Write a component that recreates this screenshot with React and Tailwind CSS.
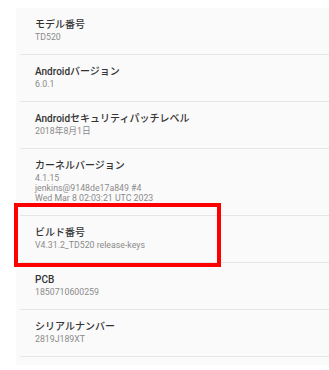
const rows = [
  { title: 'モデル番号', sub: ['TD520'] },
  { title: 'Androidバージョン', sub: ['6.0.1'] },
  { title: 'Androidセキュリティパッチレベル', sub: ['2018年8月1日'] },
  {
    title: 'カーネルバージョン',
    sub: ['4.1.15', 'jenkins@9148de17a849 #4', 'Wed Mar 8 02:03:21 UTC 2023'],
  },
  { title: 'ビルド番号', sub: ['V4.31.2_TD520 release-keys'] },
  { title: 'PCB', sub: ['1850710600259'] },
  { title: 'シリアルナンバー', sub: ['2819J189XT'] },
]

export default function App() {
  return (
    <div
      className="relative w-full h-[370px] bg-white pt-[8px] pl-[16px] overflow-hidden"
      style={{ fontFamily: "Roboto, 'Noto Sans CJK JP', sans-serif" }}
    >
      <div className="bg-[#fafafa] pb-[8px]">
        {rows.map((row) => (
          <div key={row.title}>
            <div className="pl-[19px] pt-[10px] pb-[12px]">
              <div className="text-[10px] leading-[14px] text-[#333] font-medium">{row.title}</div>
              {row.sub.map((line) => (
                <div key={line} className="text-[8.75px] leading-[10px] text-[#8a8a8a]">
                  {line}
                </div>
              ))}
            </div>
            <div className="ml-[4px] h-px bg-[#e6e6e6]" />
          </div>
        ))}
      </div>
      <div className="absolute left-[14px] top-[203px] w-[207px] h-[64px] border-4 border-[#ff0000]" />
    </div>
  )
}
